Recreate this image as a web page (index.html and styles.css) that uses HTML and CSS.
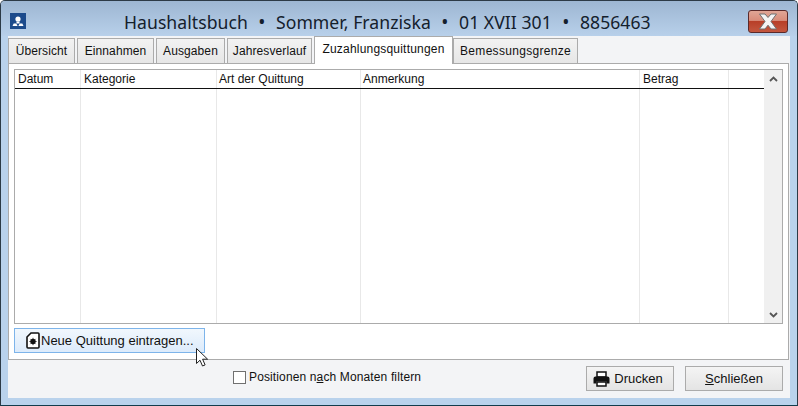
FILE: index.html
```html
<!DOCTYPE html>
<html lang="de">
<head>
  <meta charset="UTF-8" />
  <title>Haushaltsbuch</title>
  <link rel="stylesheet" href="styles.css">
</head>
<body>
  <div class="window">
    <div class="titlebar">
      <svg class="app-icon" width="16" height="16" viewBox="0 0 16 16">
        <rect width="16" height="16" fill="#1c4b8c"/>
        <circle cx="8" cy="6" r="2.6" fill="#fff"/>
        <path d="M6.500 8.500h3v2h-3z" fill="#fff"/>
        <path d="M2.500 13l1.200-2.600h2.600L7.600 13zM8.400 13l1.300-2.600h2.600l1.200 2.600z" fill="#fff"/>
      </svg>
      <div class="title">Haushaltsbuch<span class="dot">•</span>Sommer, Franziska<span class="dot">•</span>01 XVII 301<span class="dot">•</span>8856463</div>
      <div class="close">
        <svg width="24" height="17" viewBox="0 0 24 17">
          <path d="M3.500 1h5.500l3 3.500L15 1h5.500l-5.500 7.500 5.500 7.500H15l-3-3.800L9 16H3.500L9 8.500z" fill="#f4f4f4" stroke="#6f6f6f" stroke-width="1"/>
        </svg>
      </div>
    </div>

    <div class="client">
      <div class="tabs">
        <div class="tab w-uebersicht">Übersicht</div>
        <div class="tab w-einnahmen">Einnahmen</div>
        <div class="tab w-ausgaben">Ausgaben</div>
        <div class="tab w-jahr">Jahresverlauf</div>
        <div class="tab active">Zuzahlungsquittungen</div>
        <div class="tab w-grenze">Bemessungsgrenze</div>
      </div>

      <div class="panel">
        <div class="list">
          <div class="columns">
            <div class="col c-datum"><div class="head">Datum</div></div>
            <div class="col c-kat"><div class="head">Kategorie</div></div>
            <div class="col c-art"><div class="head tight">Art der Quittung</div></div>
            <div class="col c-anm"><div class="head tight">Anmerkung</div></div>
            <div class="col c-betrag"><div class="head">Betrag</div></div>
            <div class="col c-rest"><div class="head"></div></div>
          </div>
          <div class="scrollbar">
            <div class="arrow">
              <svg width="9" height="6" viewBox="0 0 9 6"><path d="M1 5l3.500-3.500L8 5" fill="none" stroke="#555" stroke-width="1.800"/></svg>
            </div>
            <div class="arrow">
              <svg width="9" height="6" viewBox="0 0 9 6"><path d="M1 1l3.500 3.500L8 1" fill="none" stroke="#555" stroke-width="1.800"/></svg>
            </div>
          </div>
        </div>
        <div class="new-btn">
          <svg width="14" height="17" viewBox="0 0 14 17">
            <path d="M5 1h7a1 1 0 0 1 1 1v13a1 1 0 0 1-1 1H2a1 1 0 0 1-1-1V5z" fill="#fff" stroke="#111" stroke-width="1.600"/>
            <circle cx="7" cy="9.500" r="2.700" fill="#111"/>
            <path d="M7 5.800v7.400M3.300 9.500h7.400M4.400 6.900l5.200 5.200M9.600 6.900l-5.200 5.200" stroke="#111" stroke-width=".7"/>
          </svg>
          <span>Neue Quittung eintragen...</span>
        </div>
      </div>

      <div class="bottom">
        <label class="filter"><span class="check"></span><span>Positionen n<u>a</u>ch Monaten filtern</span></label>
        <div class="btn print">
          <svg width="17" height="16" viewBox="0 0 17 16">
            <path d="M4 1h9v5H4z" fill="#fff" stroke="#111" stroke-width="1.500"/>
            <path d="M2.500 5.500h12a2 2 0 0 1 2 2v5h-3v-2h-10v2h-3v-5a2 2 0 0 1 2-2z" fill="#111"/>
            <path d="M4 11h9v4H4z" fill="#fff" stroke="#111" stroke-width="1.500"/>
          </svg>
          <span>Drucken</span>
        </div>
        <div class="btn quit"><span><u>S</u>chließen</span></div>
      </div>
    </div>

    <svg class="cursor" width="13" height="19" viewBox="0 0 13 19">
      <path d="M.5.500v15l3.500-3.300 2.500 5.800 2.600-1.100-2.500-5.700h5z" fill="#fff" stroke="#222" stroke-width="1"/>
    </svg>
  </div>
</body>
</html>
```

FILE: styles.css
```css
* {
  margin: 0;
  padding: 0;
  box-sizing: border-box;
}

html, body {
  width: 798px;
  height: 406px;
  overflow: hidden;
  background: #fff;
}

body {
  font-family: 'Liberation Sans', Arial, sans-serif;
  font-size: 12px;
  color: #111;
}

.window {
  position: relative;
  width: 798px;
  height: 406px;
  display: flex;
  flex-direction: column;
  border: 1px solid #2c3a46;
  border-bottom-color: #123c4c;
  border-radius: 5px 5px 0 0;
  background: #b9d2ec;
  padding: 0 7px 7px;
}

.titlebar {
  height: 35px;
  flex: none;
  display: flex;
  margin: 0 -7px;
  padding: 0 9px 0 9px;
  border-radius: 4px 4px 0 0;
  background: linear-gradient(#9db6d2, #b8d0ea);
}

.app-icon {
  margin-top: 12px;
  flex: none;
}

.title {
  margin: 9px 0 0 98px;
  width: 620px;
  font-family: 'Noto Sans', sans-serif;
  font-size: 17.600px;
  line-height: 24px;
  letter-spacing: .04px;
  color: #14202c;
  white-space: nowrap;
}

.dot {
  margin: 0 10.500px;
  font-size: 19px;
}

.close {
  width: 40px;
  height: 23px;
  margin: 9px 0 0 auto;
  display: flex;
  align-items: center;
  justify-content: center;
  border: 1px solid #5a2a2a;
  border-radius: 3px;
  background: linear-gradient(#e0a696 0, #d88c7a 45%, #b83f28 50%, #c3573f 100%);
}

.client {
  flex: 1;
  display: flex;
  flex-direction: column;
  background: #f3f4f6;
}

.tabs {
  height: 27px;
  flex: none;
  display: flex;
  align-items: flex-end;
  gap: 2px;
  position: relative;
  z-index: 1;
}

.tab {
  height: 25px;
  display: flex;
  align-items: center;
  justify-content: center;
  background: linear-gradient(#f2f2f2, #e6e6e6);
  border: 1px solid #ababab;
  border-bottom: 0;
  letter-spacing: .1px;
}

.w-uebersicht { width: 67px; }
.w-einnahmen { width: 77px; }
.w-ausgaben { width: 69px; }
.w-jahr { width: 85px; }
.w-grenze { width: 125px; margin-left: -2px; letter-spacing: .3px; }

.tab.active {
  width: 139px;
  height: 28px;
  margin-bottom: -1px;
  padding-bottom: 3px;
  background: #fff;
  letter-spacing: .2px;
}

.panel {
  width: 781px;
  height: 297px;
  flex: none;
  display: flex;
  flex-direction: column;
  padding: 5px 5px 0;
  background: #fff;
  border: 1px solid #ababab;
}

.list {
  height: 255px;
  flex: none;
  display: flex;
  border: 1px solid #ababab;
}

.columns {
  flex: 1;
  display: flex;
}

.col {
  flex: none;
  border-right: 1px solid #e8e8e8;
}

.c-datum { width: 66px; }
.c-kat { width: 136px; }
.c-art { width: 144px; }
.c-anm { width: 279px; }
.c-betrag { width: 89px; }
.c-rest { flex: 1; border-right: 0; }

.head {
  height: 19px;
  padding: 2px 0 0 3px;
  line-height: 15px;
  border-bottom: 1px solid #111;
  margin-right: -1px;
  white-space: nowrap;
}

.head.tight {
  padding-left: 2px;
}

.scrollbar {
  width: 18px;
  flex: none;
  display: flex;
  flex-direction: column;
  justify-content: space-between;
  background: #f0f0f0;
}

.arrow {
  height: 17px;
  display: flex;
  align-items: center;
  justify-content: center;
}

.new-btn {
  width: 191px;
  height: 25px;
  margin-top: 4px;
  display: flex;
  align-items: center;
  gap: 1px;
  padding-left: 11px;
  font-size: 13px;
  border: 1px solid #7db4ea;
  background: linear-gradient(#f1f7fd, #dcebfb);
}

.bottom {
  flex: 1;
  display: flex;
  align-items: flex-start;
  padding-top: 6px;
}

.filter {
  display: flex;
  align-items: center;
  height: 16px;
  margin: 3px 0 0 225px;
  gap: 3px;
  letter-spacing: .13px;
  white-space: nowrap;
}

.check {
  width: 13px;
  height: 13px;
  border: 1px solid #707070;
  background: #fff;
}

.btn {
  height: 25px;
  display: flex;
  align-items: center;
  justify-content: center;
  font-size: 13px;
  border: 1px solid #ababab;
  background: linear-gradient(#f4f4f4, #e4e4e4);
}

.print {
  width: 88px;
  margin-left: auto;
  gap: 4px;
  padding-right: 4px;
}

.quit {
  width: 98px;
  margin: 0 7px 0 11px;
}

.cursor {
  position: absolute;
  left: 195px;
  top: 347px;
}
```
